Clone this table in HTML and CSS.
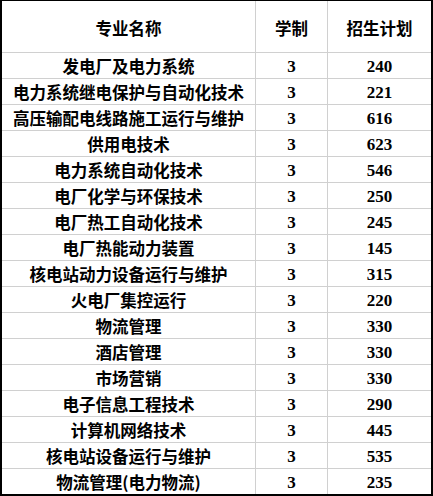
FILE: index.html
```html
<!DOCTYPE html>
<html lang="zh-CN">
<head>
<meta charset="utf-8">
<link rel="stylesheet" href="styles.css">
</head>
<body>
<table class="plan">
<colgroup><col class="c-name"><col class="c-year"><col class="c-num"></colgroup>
<thead>
<tr class="head"><th>专业名称</th><th>学制</th><th>招生计划</th></tr>
</thead>
<tbody>
<tr><td>发电厂及电力系统</td><td class="n">3</td><td class="n">240</td></tr>
<tr><td>电力系统继电保护与自动化技术</td><td class="n">3</td><td class="n">221</td></tr>
<tr><td>高压输配电线路施工运行与维护</td><td class="n">3</td><td class="n">616</td></tr>
<tr><td>供用电技术</td><td class="n">3</td><td class="n">623</td></tr>
<tr><td>电力系统自动化技术</td><td class="n">3</td><td class="n">546</td></tr>
<tr><td>电厂化学与环保技术</td><td class="n">3</td><td class="n">250</td></tr>
<tr><td>电厂热工自动化技术</td><td class="n">3</td><td class="n">245</td></tr>
<tr><td>电厂热能动力装置</td><td class="n">3</td><td class="n">145</td></tr>
<tr><td>核电站动力设备运行与维护</td><td class="n">3</td><td class="n">315</td></tr>
<tr><td>火电厂集控运行</td><td class="n">3</td><td class="n">220</td></tr>
<tr><td>物流管理</td><td class="n">3</td><td class="n">330</td></tr>
<tr><td>酒店管理</td><td class="n">3</td><td class="n">330</td></tr>
<tr><td>市场营销</td><td class="n">3</td><td class="n">330</td></tr>
<tr><td>电子信息工程技术</td><td class="n">3</td><td class="n">290</td></tr>
<tr><td>计算机网络技术</td><td class="n">3</td><td class="n">445</td></tr>
<tr><td>核电站设备运行与维护</td><td class="n">3</td><td class="n">535</td></tr>
<tr class="last"><td>物流管理(电力物流)</td><td class="n">3</td><td class="n">235</td></tr>
</tbody>
</table>
</body>
</html>
```
FILE: styles.css
```css
html, body {
  margin: 0;
  padding: 0;
  background: #fff;
}
.plan {
  width: 433px;
  table-layout: fixed;
  border-collapse: separate;
  border-spacing: 0;
  border-left: 2px solid #000;
  border-top: 1px solid #000;
  border-right: 2px solid #000;
  border-bottom: 2px solid #000;
  font-family: "Noto Sans CJK SC", sans-serif;
  font-weight: bold;
  font-size: 16.5px;
  color: #000;
}
.c-name { width: 254px; }
.c-year { width: 72px; }
.c-num { width: 103px; }
.plan th, .plan td {
  padding: 0;
  text-align: center;
  vertical-align: middle;
  border-right: 1px solid #d0d0d0;
  border-bottom: 1px solid #d0d0d0;
  line-height: 1;
  white-space: nowrap;
  box-sizing: border-box;
}
.plan th:last-child, .plan td:last-child {
  border-right: 0;
}
.plan tr.last td {
  border-bottom: 0;
}
.plan tr.head th {
  height: 52px;
  font-weight: bold;
  padding-top: 3px;
}
.plan tbody td {
  height: 26px;
  padding-top: 2px;
}
.plan tbody tr.last td {
  height: 25px;
}
.plan td.n {
  font-family: "Liberation Serif", serif;
  font-size: 17px;
  font-weight: bold;
}
```
